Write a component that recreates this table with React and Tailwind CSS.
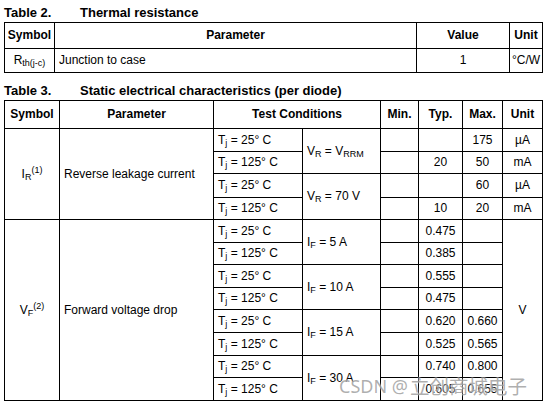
import React from "react";

const B = "border-r border-b border-black flex items-center";
const C = B + " justify-center";
const L = B + " pl-[4px]";
const H = C + " font-bold";

function Tj({ t }) {
  return (
    <div className={L}>
      <span>
        T<sub className="text-[9px]">j</sub> = {t}° C
      </span>
    </div>
  );
}

function Cond({ sym, sub, rhs }) {
  return (
    <div className={L + " row-span-2"}>
      <span>
        {sym}
        <sub className="text-[9px]">{sub}</sub> = {rhs}
      </span>
    </div>
  );
}

function V({ v }) {
  return <div className={C}>{v}</div>;
}

export default function App() {
  return (
    <div
      className="relative w-[545px] h-[404px] bg-white overflow-hidden text-black text-[12px] leading-[15px]"
      style={{ fontFamily: '"Liberation Sans", Arial, sans-serif' }}
    >
      <div className="flex pt-[5px] pl-[4px] text-[13px] leading-[15px] font-bold">
        <span className="w-[76px]">Table 2.</span>
        <span>Thermal resistance</span>
      </div>
      <div className="ml-[4px] mt-[2px] grid w-[539px] grid-cols-[50px_362px_93px_33px] grid-rows-[26px_24px] border-l border-t border-black">
        <div className={H}>Symbol</div>
        <div className={H}>Parameter</div>
        <div className={H}>Value</div>
        <div className={H}>Unit</div>
        <div className={C}>
          <span>
            R<sub className="text-[9px]">th(j-c)</sub>
          </span>
        </div>
        <div className={L}>Junction to case</div>
        <div className={C}>1</div>
        <div className={C}>°C/W</div>
      </div>

      <div className="flex mt-[10px] pl-[4px] text-[13px] leading-[15px] font-bold">
        <span className="w-[76px]">Table 3.</span>
        <span>Static electrical characteristics (per diode)</span>
      </div>
      <div className="ml-[4px] mt-[2px] grid w-[539px] grid-cols-[55px_154px_89px_78px_38px_44px_40px_40px] grid-rows-[28px_23px_22px_24px_22px_23px_22px_23px_22px_23px_23px_22px_23px] border-l border-t border-black">
        <div className={H}>Symbol</div>
        <div className={H}>Parameter</div>
        <div className={H + " col-span-2"}>Test Conditions</div>
        <div className={H}>Min.</div>
        <div className={H}>Typ.</div>
        <div className={H}>Max.</div>
        <div className={H}>Unit</div>

        {/* IR */}
        <div className={C + " row-span-4"}>
          <span>
            I<sub className="text-[9px]">R</sub>
            <sup className="text-[9px]">(1)</sup>
          </span>
        </div>
        <div className={L + " row-span-4"}>Reverse leakage current</div>
        <Tj t="25" />
        <Cond sym="V" sub="R" rhs={<>V<sub className="text-[9px]">RRM</sub></>} />
        <V v="" />
        <V v="" />
        <V v="175" />
        <V v="µA" />
        <Tj t="125" />
        <V v="" />
        <V v="20" />
        <V v="50" />
        <V v="mA" />
        <Tj t="25" />
        <Cond sym="V" sub="R" rhs="70 V" />
        <V v="" />
        <V v="" />
        <V v="60" />
        <V v="µA" />
        <Tj t="125" />
        <V v="" />
        <V v="10" />
        <V v="20" />
        <V v="mA" />

        {/* VF */}
        <div className={C + " row-span-8"}>
          <span>
            V<sub className="text-[9px]">F</sub>
            <sup className="text-[9px]">(2)</sup>
          </span>
        </div>
        <div className={L + " row-span-8"}>Forward voltage drop</div>
        <Tj t="25" />
        <Cond sym="I" sub="F" rhs="5 A" />
        <V v="" />
        <V v="0.475" />
        <V v="" />
        <div className={C + " row-span-8"}>V</div>
        <Tj t="125" />
        <V v="" />
        <V v="0.385" />
        <V v="" />
        <Tj t="25" />
        <Cond sym="I" sub="F" rhs="10 A" />
        <V v="" />
        <V v="0.555" />
        <V v="" />
        <Tj t="125" />
        <V v="" />
        <V v="0.475" />
        <V v="" />
        <Tj t="25" />
        <Cond sym="I" sub="F" rhs="15 A" />
        <V v="" />
        <V v="0.620" />
        <V v="0.660" />
        <Tj t="125" />
        <V v="" />
        <V v="0.525" />
        <V v="0.565" />
        <Tj t="25" />
        <Cond sym="I" sub="F" rhs="30 A" />
        <V v="" />
        <V v="0.740" />
        <V v="0.800" />
        <Tj t="125" />
        <V v="" />
        <V v="0.605" />
        <V v="0.655" />
      </div>

      <div
        className="absolute left-[339px] top-[373px] flex items-center whitespace-nowrap text-[rgba(140,140,140,0.7)] [text-shadow:0_0_2px_#fff]"
        style={{ fontFamily: '"Noto Sans", "Noto Sans CJK SC", sans-serif' }}
      >
        <span className="text-[18px] leading-[26px]">CSDN @</span>
        <span className="text-[19.5px] leading-[26px] ml-[2px]" style={{ fontFamily: '"Noto Sans CJK SC", sans-serif' }}>
          立创商城电子
        </span>
      </div>
    </div>
  );
}
